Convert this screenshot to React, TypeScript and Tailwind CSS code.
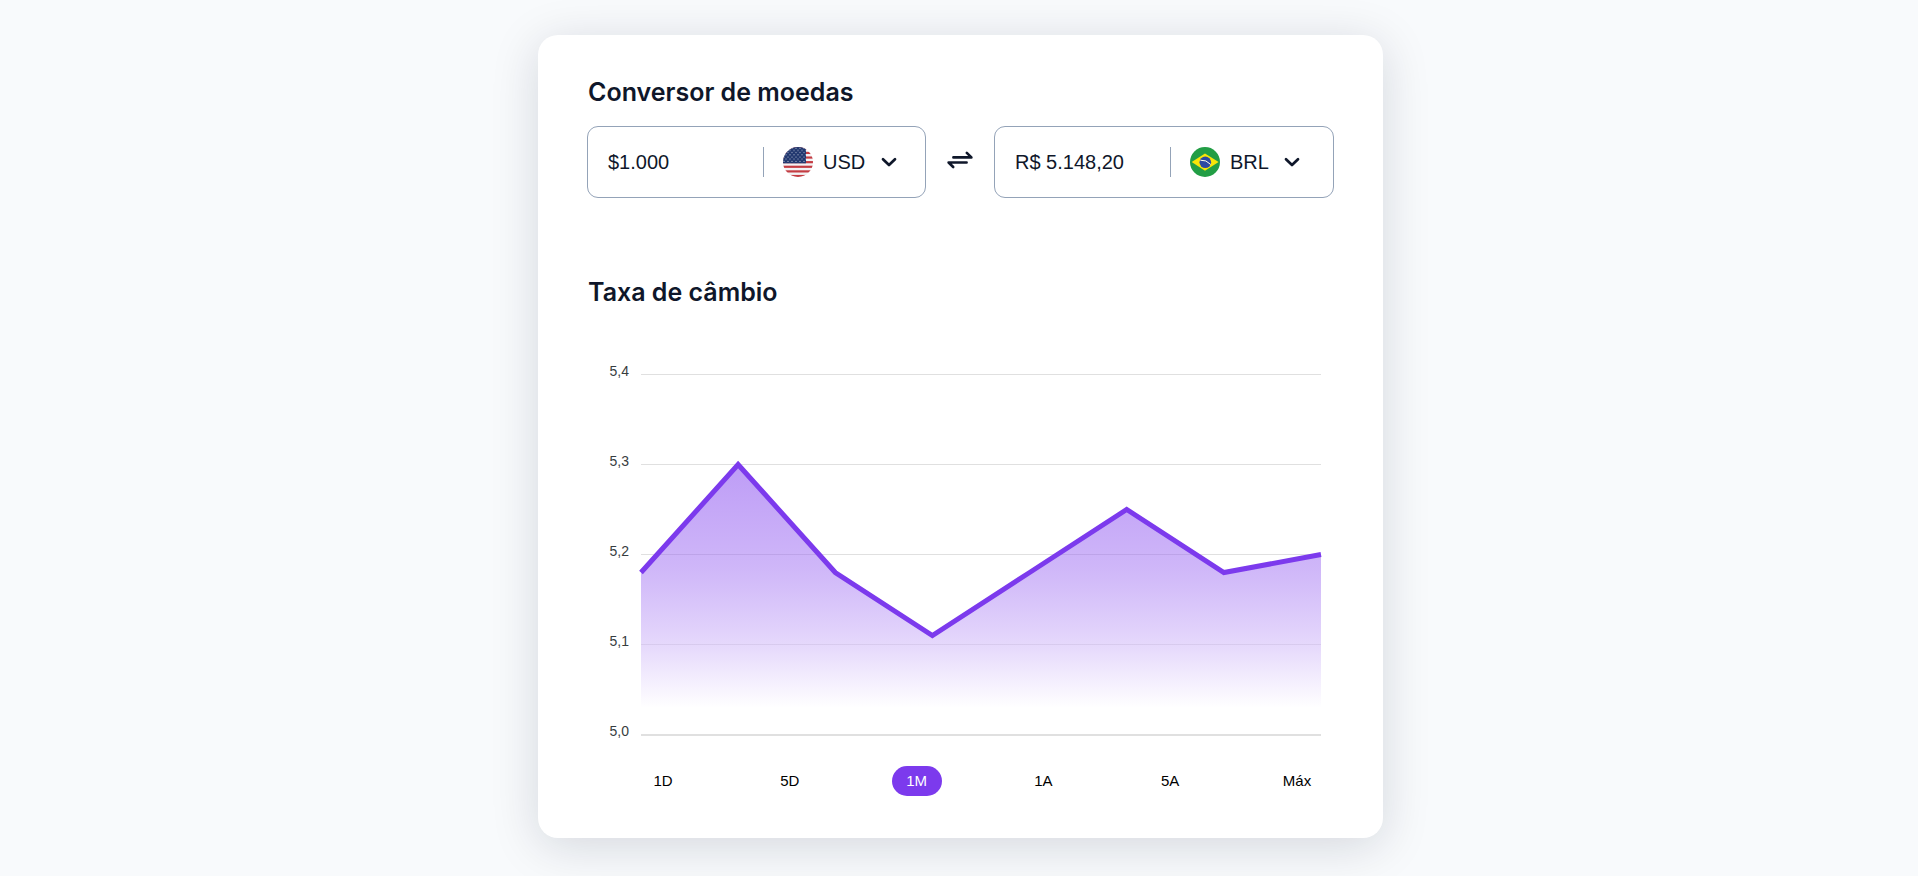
import React from "react";

const TICKS = ["5,4", "5,3", "5,2", "5,1", "5,0"];
const RATES = [5.18, 5.3, 5.18, 5.11, 5.18, 5.25, 5.18, 5.2];
const RANGES = ["1D", "5D", "1M", "1A", "5A", "Máx"];

const WIDTH = 680;
const HEIGHT = 362;
const points = RATES.map((rate, i) => [
  (i * WIDTH) / (RATES.length - 1),
  (5.4 - rate) * 900 + 0.5,
]);
const line = points.map(([x, y]) => `${x.toFixed(1)},${y.toFixed(1)}`).join(" L");

function UsFlag() {
  return (
    <svg viewBox="0 0 30 30" className="size-[30px] shrink-0">
      <defs>
        <clipPath id="us-round">
          <circle cx="15" cy="15" r="15" />
        </clipPath>
        <pattern id="us-stars" width="4" height="4.4" patternUnits="userSpaceOnUse">
          <circle cx="1" cy="1.2" r="0.62" fill="#c9d0df" />
          <circle cx="3" cy="3.4" r="0.62" fill="#c9d0df" />
        </pattern>
      </defs>
      <g clipPath="url(#us-round)">
        <rect width="30" height="30" fill="#f3f3f5" />
        {[0, 1, 2, 3, 4, 5, 6].map((i) => (
          <rect key={i} y={0.2 + i * 4.62} width="30" height="2.2" fill="#c43c42" />
        ))}
        <rect width="23" height="16.3" fill="#22386f" />
        <rect width="23" height="16.3" fill="url(#us-stars)" />
      </g>
    </svg>
  );
}

function BrFlag() {
  return (
    <svg viewBox="0 0 30 30" className="size-[30px] shrink-0">
      <circle cx="15" cy="15" r="15" fill="#229e45" />
      <path d="M15 6.5 28.6 15 15 23.7 1.7 15Z" fill="#f8e509" />
      <circle cx="15.3" cy="15.3" r="5.8" fill="#2b49a3" />
      <path d="M10.4 13.2q5.8-.6 10.2 4.2" fill="none" stroke="#ffffef" strokeWidth="1" />
    </svg>
  );
}

function Chevron() {
  return (
    <svg viewBox="0 0 16 10" className="ml-[15.5px] h-[10px] w-4 shrink-0">
      <path
        d="M2 2.3 8 8 14 2.3"
        fill="none"
        stroke="#0f172a"
        strokeWidth="2.7"
        strokeLinecap="round"
        strokeLinejoin="round"
      />
    </svg>
  );
}

function SwapIcon() {
  return (
    <svg viewBox="0 0 26 18" className="mb-1 h-[18px] w-[26px] shrink-0">
      <path
        d="M6.4 6.4H24.4L19.8 1.9M19.6 11.5H1.6L6.2 16"
        fill="none"
        stroke="#0f172a"
        strokeWidth="2.6"
        strokeLinecap="round"
        strokeLinejoin="round"
      />
    </svg>
  );
}

type FieldProps = { value: string; code: string; flag: React.ReactNode };

function CurrencyField({ value, code, flag }: FieldProps) {
  return (
    <div className="flex h-[72px] items-center rounded-[11px] border border-[#94a3b8] pl-[20px] font-['Liberation_Sans',sans-serif] text-xl text-[#0f172a]">
      <span className="w-[155px]">{value}</span>
      <span className="h-[30px] w-px bg-[#94a3b8]" />
      <button className="flex items-center pl-[19px]">
        {flag}
        <span className="ml-[10px]">{code}</span>
        <Chevron />
      </button>
    </div>
  );
}

function RateChart() {
  return (
    <div className="mt-[64px] flex h-[362px]">
      <div className="-mt-[13px] flex w-[42px] flex-col text-right font-['Liberation_Sans',sans-serif] text-sm text-[#373d3f]">
        {TICKS.map((tick) => (
          <span key={tick} className="h-[90px] shrink-0 leading-5">
            {tick}
          </span>
        ))}
      </div>
      <svg
        width={WIDTH}
        height={HEIGHT}
        viewBox={`0 0 ${WIDTH} ${HEIGHT}`}
        className="ml-3 shrink-0 overflow-visible"
      >
        <defs>
          <linearGradient id="rate-fill" x1="0" y1="90" x2="0" y2="334" gradientUnits="userSpaceOnUse">
            <stop offset="0" stopColor="#7c3aed" stopOpacity="0.5" />
            <stop offset="0.42" stopColor="#9e6df2" stopOpacity="0.5" />
            <stop offset="0.75" stopColor="#d2bbf9" stopOpacity="0.55" />
            <stop offset="1" stopColor="#ffffff" stopOpacity="0.55" />
          </linearGradient>
        </defs>
        {[0, 90, 180, 270].map((y) => (
          <path key={y} d={`M0 ${y + 0.5}H${WIDTH}`} stroke="#e0e0e0" />
        ))}
        <path d={`M0 361H${WIDTH}`} stroke="#e0e0e0" strokeWidth="2" />
        <path d={`M${line} V334 H0Z`} fill="url(#rate-fill)" />
        <path d={`M${line}`} fill="none" stroke="#7c3aed" strokeWidth="5" />
      </svg>
    </div>
  );
}

export default function App() {
  return (
    <main className="flex h-screen justify-center overflow-hidden bg-[#f8fafc] pt-[35px] pl-[3px] font-['Inter','Liberation_Sans',sans-serif]">
      <section className="h-[803px] w-[845px] rounded-[20px] bg-white pt-[39px] pr-[49px] pl-[49px] shadow-[0_8px_48px_rgba(15,18,45,0.15)]">
        <h1 className="pl-px text-[25px] leading-9 font-[560] text-[#0f172a]">
          Conversor de moedas
        </h1>
        <div className="mt-4 grid grid-cols-[339px_26px_340px] items-center gap-[21px]">
          <CurrencyField value="$1.000" code="USD" flag={<UsFlag />} />
          <SwapIcon />
          <CurrencyField value="R$ 5.148,20" code="BRL" flag={<BrFlag />} />
        </div>
        <h2 className="mt-[76px] pl-px text-[25px] leading-9 font-[560] text-[#0f172a]">
          Taxa de câmbio
        </h2>
        <RateChart />
        <div className="mt-[30px] -mr-[37px] flex justify-between pr-[49px] pl-[51px] font-['Liberation_Sans',sans-serif] text-[15px] text-black">
          {RANGES.map((range) => (
            <button
              key={range}
              className={
                range === "1M"
                  ? "h-[30px] w-[50px] rounded-full bg-[#7c3aed] text-white"
                  : "h-[30px] w-[50px]"
              }
            >
              {range}
            </button>
          ))}
        </div>
      </section>
    </main>
  );
}
